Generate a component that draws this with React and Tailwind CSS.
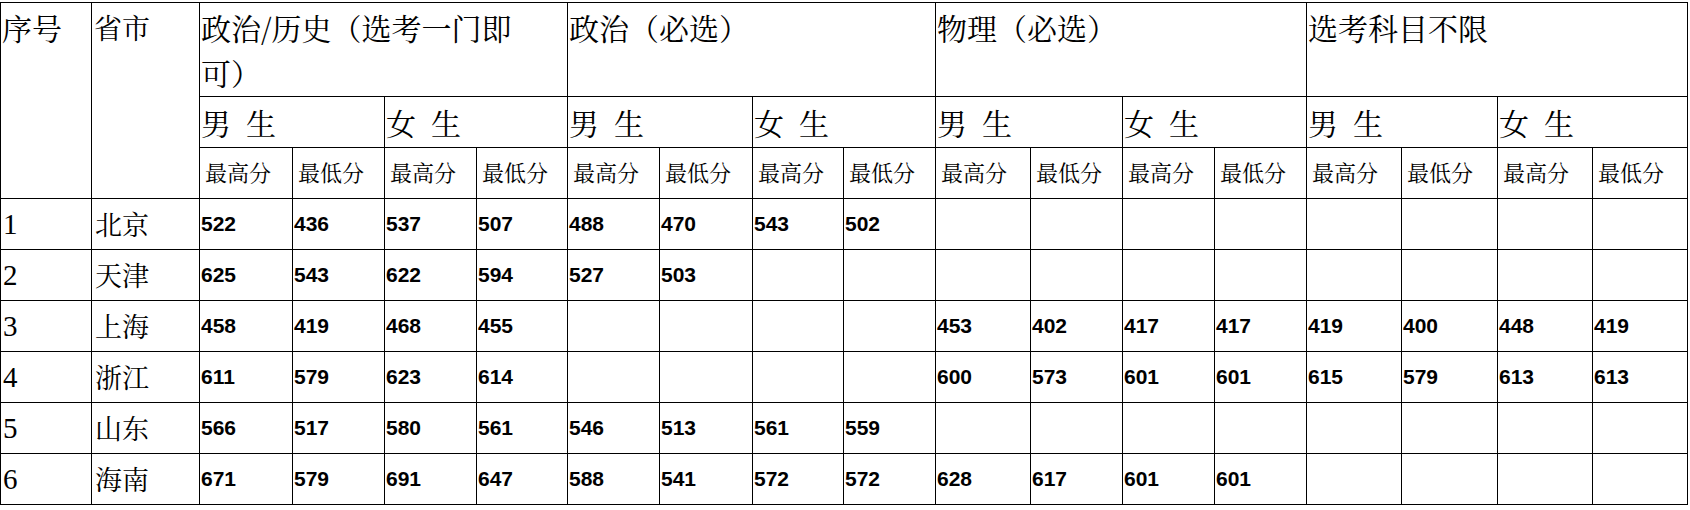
import React from "react";

const widths = [91, 108, 93, 92, 92, 91, 92, 93, 91, 92, 95, 92, 92, 92, 95, 96, 95, 95];

const groups = [
  <>
    政治/历史（选考一门即
    <br />
    可）
  </>,
  "政治（必选）",
  "物理（必选）",
  "选考科目不限",
];

const rows = [
  ["1", "北京", ["522", "436", "537", "507", "488", "470", "543", "502", "", "", "", "", "", "", "", ""]],
  ["2", "天津", ["625", "543", "622", "594", "527", "503", "", "", "", "", "", "", "", "", "", ""]],
  ["3", "上海", ["458", "419", "468", "455", "", "", "", "", "453", "402", "417", "417", "419", "400", "448", "419"]],
  ["4", "浙江", ["611", "579", "623", "614", "", "", "", "", "600", "573", "601", "601", "615", "579", "613", "613"]],
  ["5", "山东", ["566", "517", "580", "561", "546", "513", "561", "559", "", "", "", "", "", "", "", ""]],
  ["6", "海南", ["671", "579", "691", "647", "588", "541", "572", "572", "628", "617", "601", "601", "", "", "", ""]],
];

const cjk = "font-['Noto_Serif_CJK_SC','Noto_Sans_CJK_SC',serif]";

function Pair({ a, b }) {
  return (
    <span className="inline-flex">
      <span>{a}</span>
      <span className="ml-[15px]">{b}</span>
    </span>
  );
}

export default function App() {
  return (
    <div className="bg-white w-[1690px] h-[510px] pt-[2px] overflow-hidden text-black">
      <table className="border-collapse table-fixed w-[1688px]">
        <colgroup>
          {widths.map((w, i) => (
            <col key={i} style={{ width: w }} />
          ))}
        </colgroup>
        <thead>
          <tr className="h-[94px]">
            <th rowSpan={3} className={`border border-black align-top text-left font-normal pl-[1px] pt-[2px] text-[30px] leading-[45px] ${cjk}`}>
              序号
            </th>
            <th rowSpan={3} className={`border border-black align-top text-left font-normal pl-[2px] pt-[2px] text-[28px] leading-[45px] ${cjk}`}>
              省市
            </th>
            {groups.map((g, i) => (
              <th key={i} colSpan={4} className={`border border-black align-top text-left font-normal pl-[1px] pr-[2px] pt-[2px] text-[30px] leading-[45px] ${cjk}`}>
                {g}
              </th>
            ))}
          </tr>
          <tr className="h-[51px]">
            {[0, 1, 2, 3].map((i) => (
              <React.Fragment key={i}>
                <th colSpan={2} className={`border border-black align-middle text-left font-normal pl-[1px] text-[30px] leading-[30px] ${cjk}`}>
                  <Pair a="男" b="生" />
                </th>
                <th colSpan={2} className={`border border-black align-middle text-left font-normal pl-[1px] text-[30px] leading-[30px] ${cjk}`}>
                  <Pair a="女" b="生" />
                </th>
              </React.Fragment>
            ))}
          </tr>
          <tr className="h-[51px]">
            {Array.from({ length: 8 }).map((_, i) => (
              <React.Fragment key={i}>
                <th className={`border border-black align-middle text-left font-normal pl-[5px] pb-[3px] text-[22px] leading-[26px] ${cjk}`}>
                  最高分
                </th>
                <th className={`border border-black align-middle text-left font-normal pl-[5px] pb-[3px] text-[22px] leading-[26px] ${cjk}`}>
                  最低分
                </th>
              </React.Fragment>
            ))}
          </tr>
        </thead>
        <tbody>
          {rows.map(([n, p, vals]) => (
            <tr key={n} className="h-[51px]">
              <td className="border border-black align-middle pl-[2px] text-[29px] leading-[30px] font-['Liberation_Serif',serif]">
                {n}
              </td>
              <td className={`border border-black align-middle pl-[3px] text-[27px] leading-[30px] ${cjk}`}>
                {p}
              </td>
              {vals.map((v, i) => (
                <td key={i} className="border border-black align-middle pl-[1px] text-[21px] leading-[24px] font-bold font-['Liberation_Sans',sans-serif]">
                  {v}
                </td>
              ))}
            </tr>
          ))}
        </tbody>
      </table>
    </div>
  );
}
